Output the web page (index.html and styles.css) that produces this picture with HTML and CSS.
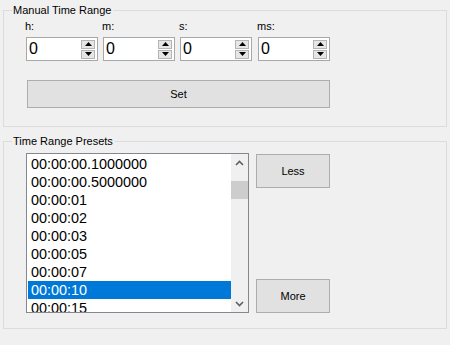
FILE: index.html
```
<!DOCTYPE html>
<html lang="en">
<head>
    <meta charset="UTF-8">
    <title>Time Range</title>
    <link rel="stylesheet" href="styles.css">
</head>
<body>
    <fieldset class="group group-manual">
        <legend>Manual Time Range</legend>
        <div class="fields">
            <div class="field">
                <label>h:</label>
                <div class="spin">
                    <span class="spin-value">0</span>
                    <div class="spin-buttons">
                        <span class="spin-btn"><svg width="7" height="4" viewBox="0 0 7 4"><path d="M3.5 0 L7 4 L0 4 Z"/></svg></span>
                        <span class="spin-btn"><svg width="7" height="4" viewBox="0 0 7 4"><path d="M0 0 L7 0 L3.5 4 Z"/></svg></span>
                    </div>
                </div>
            </div>
            <div class="field">
                <label>m:</label>
                <div class="spin">
                    <span class="spin-value">0</span>
                    <div class="spin-buttons">
                        <span class="spin-btn"><svg width="7" height="4" viewBox="0 0 7 4"><path d="M3.5 0 L7 4 L0 4 Z"/></svg></span>
                        <span class="spin-btn"><svg width="7" height="4" viewBox="0 0 7 4"><path d="M0 0 L7 0 L3.5 4 Z"/></svg></span>
                    </div>
                </div>
            </div>
            <div class="field">
                <label>s:</label>
                <div class="spin">
                    <span class="spin-value">0</span>
                    <div class="spin-buttons">
                        <span class="spin-btn"><svg width="7" height="4" viewBox="0 0 7 4"><path d="M3.5 0 L7 4 L0 4 Z"/></svg></span>
                        <span class="spin-btn"><svg width="7" height="4" viewBox="0 0 7 4"><path d="M0 0 L7 0 L3.5 4 Z"/></svg></span>
                    </div>
                </div>
            </div>
            <div class="field field-last">
                <label>ms:</label>
                <div class="spin">
                    <span class="spin-value">0</span>
                    <div class="spin-buttons">
                        <span class="spin-btn"><svg width="7" height="4" viewBox="0 0 7 4"><path d="M3.5 0 L7 4 L0 4 Z"/></svg></span>
                        <span class="spin-btn"><svg width="7" height="4" viewBox="0 0 7 4"><path d="M0 0 L7 0 L3.5 4 Z"/></svg></span>
                    </div>
                </div>
            </div>
        </div>
        <button class="btn btn-set">Set</button>
    </fieldset>

    <fieldset class="group group-presets">
        <legend>Time Range Presets</legend>
        <div class="presets">
            <div class="listbox">
                <ul class="list-items">
                    <li>00:00:00.1000000</li>
                    <li>00:00:00.5000000</li>
                    <li>00:00:01</li>
                    <li>00:00:02</li>
                    <li>00:00:03</li>
                    <li>00:00:05</li>
                    <li>00:00:07</li>
                    <li class="selected">00:00:10</li>
                    <li>00:00:15</li>
                </ul>
                <div class="scrollbar">
                    <span class="scroll-arrow"><svg width="9" height="6" viewBox="0 0 9 6"><path d="M1 5 L4.5 1.5 L8 5" fill="none" stroke="#606060" stroke-width="1.6"/></svg></span>
                    <div class="scroll-track"><div class="scroll-thumb"></div></div>
                    <span class="scroll-arrow"><svg width="9" height="6" viewBox="0 0 9 6"><path d="M1 1 L4.5 4.5 L8 1" fill="none" stroke="#606060" stroke-width="1.6"/></svg></span>
                </div>
            </div>
            <div class="side-buttons">
                <button class="btn btn-side">Less</button>
                <button class="btn btn-side">More</button>
            </div>
        </div>
    </fieldset>
</body>
</html>
```

FILE: styles.css
```
body {
    margin: 0;
    padding: 3px 3px 0 3px;
    width: 444px;
    background: #f0f0f0;
    font-family: 'Liberation Sans', Arial, sans-serif;
    font-size: 11px;
    color: #000;
}

/* Group boxes */
.group {
    margin: 0;
    border: 1px solid #dcdcdc;
    padding: 0 0 0 22px;
    min-width: 0;
}

.group legend {
    padding: 0 2px 0 1px;
    line-height: 14px;
    margin-left: -14px;
}

.group-manual {
    padding-top: 3px;
    padding-bottom: 18px;
}

.group-presets {
    margin-top: 7px;
    padding-top: 5px;
    padding-bottom: 15px;
}

/* Numeric fields */
.fields {
    display: flex;
    gap: 5px;
}

.field {
    display: flex;
    flex-direction: column;
    gap: 4px;
}

.field-last {
    margin-left: 1px;
}

.field label {
    line-height: 13px;
    margin-left: -1px;
}

.spin {
    width: 72px;
    height: 24px;
    box-sizing: border-box;
    border: 1px solid #a8a8a8;
    background: #fff;
    display: flex;
    align-items: center;
    justify-content: space-between;
    padding: 0 2px 0 2px;
}

.spin-value {
    font-size: 16px;
    line-height: 18px;
    color: #000;
}

.spin-buttons {
    display: flex;
    flex-direction: column;
    gap: 1px;
}

.spin-btn {
    width: 14px;
    height: 9px;
    box-sizing: border-box;
    border: 1px solid #b4b4b4;
    background: #e6e6e6;
    display: flex;
    align-items: center;
    justify-content: center;
}

.spin-btn svg {
    fill: #000;
}

/* Buttons */
.btn {
    font-family: 'Liberation Sans', Arial, sans-serif;
    font-size: 11px;
    color: #000;
    background: #e1e1e1;
    border: 1px solid #adadad;
    padding: 0;
    box-sizing: border-box;
}

.btn-set {
    display: block;
    width: 303px;
    height: 28px;
    margin: 19px 0 0 1px;
}

/* Presets */
.presets {
    display: flex;
    gap: 7px;
}

.listbox {
    width: 223px;
    height: 160px;
    box-sizing: border-box;
    border: 1px solid #828790;
    background: #fff;
    display: flex;
    overflow: hidden;
}

.list-items {
    list-style: none;
    margin: 0;
    padding: 1px 0 0 1px;
    flex: 1;
    font-size: 14.4px;
}

.list-items li {
    height: 18px;
    line-height: 18px;
    padding-left: 3px;
    white-space: nowrap;
}

.list-items li.selected {
    background: #0078d7;
    color: #fff;
}

.scrollbar {
    width: 17px;
    background: #f0f0f0;
    display: flex;
    flex-direction: column;
}

.scroll-arrow {
    height: 17px;
    display: flex;
    align-items: center;
    justify-content: center;
}

.scroll-track {
    flex: 1;
    padding-top: 10px;
}

.scroll-thumb {
    height: 18px;
    background: #cdcdcd;
}

.side-buttons {
    display: flex;
    flex-direction: column;
    justify-content: space-between;
    padding: 1px 0 0 0;
}

.btn-side {
    width: 74px;
    height: 34px;
}
```
